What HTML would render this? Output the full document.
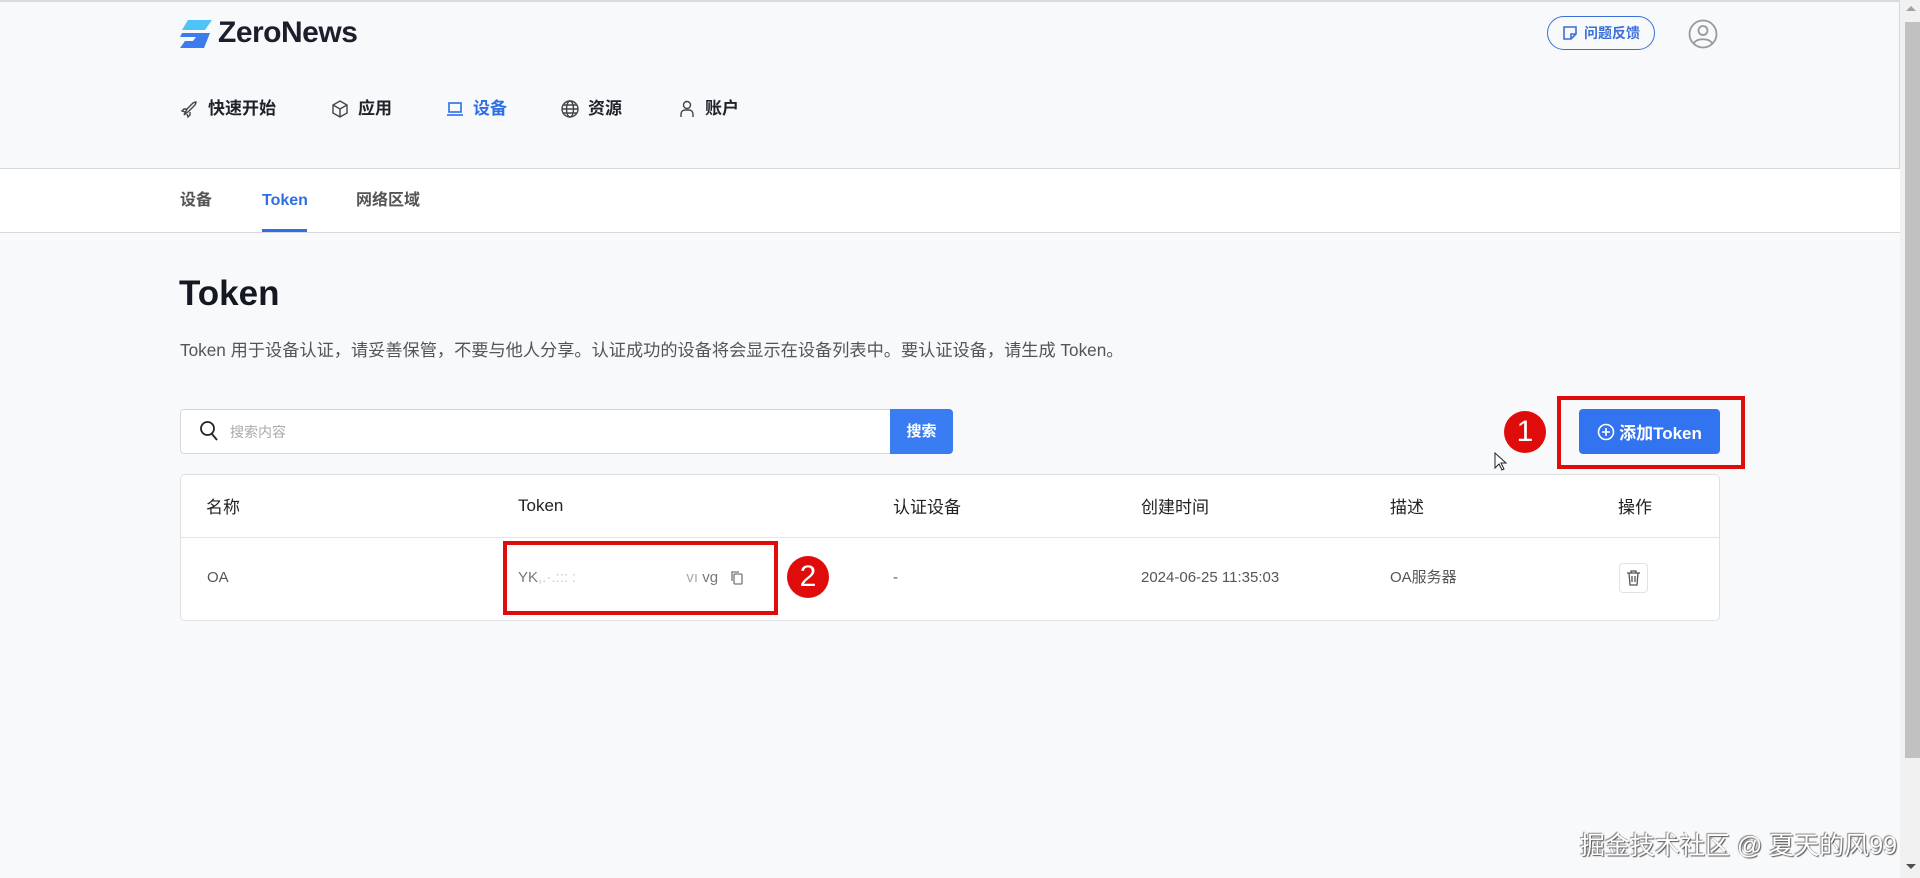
<!DOCTYPE html>
<html><head><meta charset="utf-8"><style>
*{box-sizing:border-box;margin:0;padding:0}
body{width:1920px;height:878px;overflow:hidden;background:#f8f9fb;font-family:"Liberation Sans","Noto Sans CJK SC",sans-serif;position:relative;color:#1f2329}
.abs{position:absolute}
.hdr{left:0;top:0;width:1900px;height:169px;background:#f8f9fb;border-top:2px solid #d9dbe0;border-bottom:1px solid #d6d8dc;border-right:1px solid #d6d8dc}
.sub{left:0;top:169px;width:1900px;height:64px;background:#fff;border-bottom:1px solid #d6d8dc}
.nav{top:97px;font-size:17px;font-weight:bold;display:flex;align-items:center;gap:8px;color:#1f2329;line-height:24px}
.nav svg{width:20px;height:20px}
.tab{top:189px;font-size:16px;color:#555;font-weight:bold;line-height:24px}
.red{border:4px solid #e00b0b}
.circ{width:42px;height:42px;border-radius:50%;background:#e00b0b;color:#fff;font-size:30px;text-align:center;line-height:42px}
.th{top:495px;font-size:17px;color:#222;line-height:26px}
.td{top:566px;font-size:15px;color:#555;line-height:24px}
</style></head><body>
<div class="abs hdr"></div>
<div class="abs sub"></div>
<!-- logo -->
<svg class="abs" style="left:180px;top:20px" width="34" height="28" viewBox="0 0 34 28"><path d="M8 0h24l-7 10H2z" fill="#4fc3f7"/><path d="M2 13h28l-6 15H0l5-7h8l3-4H0z" fill="#3b7cf0"/></svg>
<div class="abs" style="left:218px;top:16px;font-size:30px;font-weight:bold;color:#1b1f2c;letter-spacing:-0.5px">ZeroNews</div>
<!-- nav -->
<div class="abs nav" style="left:180px"><svg viewBox="0 0 20 20" fill="none" stroke="#444" stroke-width="1.4"><path d="M4 16l3-6 6-6c2-1 3-1 3-1s0 1-1 3l-6 6-5 4zM7 10l-3 0-2 2 3 1M10 13v3l-2 2-1-3"/></svg>快速开始</div>
<div class="abs nav" style="left:330px"><svg viewBox="0 0 20 20" fill="none" stroke="#444" stroke-width="1.4"><path d="M10 2l7 4v8l-7 4-7-4V6zM3 6l7 4 7-4M10 10v8"/></svg>应用</div>
<div class="abs nav" style="left:445px;color:#2f6fe4"><svg viewBox="0 0 20 20" fill="none" stroke="#2f6fe4" stroke-width="1.6"><rect x="4" y="4" width="12" height="9"/><path d="M2 16h16"/></svg>设备</div>
<div class="abs nav" style="left:560px"><svg viewBox="0 0 20 20" fill="none" stroke="#444" stroke-width="1.4"><circle cx="10" cy="10" r="8"/><ellipse cx="10" cy="10" rx="3.5" ry="8"/><path d="M2 10h16M3.5 6h13M3.5 14h13"/></svg>资源</div>
<div class="abs nav" style="left:677px"><svg viewBox="0 0 20 20" fill="none" stroke="#444" stroke-width="1.4"><circle cx="10" cy="6" r="3.5"/><path d="M4 18v-3a4 4 0 0 1 4-4h4a4 4 0 0 1 4 4v3"/></svg>账户</div>
<!-- feedback -->
<div class="abs" style="left:1547px;top:16px;width:108px;height:34px;border:1.5px solid #3b6fd8;border-radius:17px;color:#3b6fd8;font-size:14px;font-weight:bold;display:flex;align-items:center;justify-content:center;gap:6px"><svg width="16" height="16" viewBox="0 0 16 16" fill="none" stroke="#3b6fd8" stroke-width="1.6"><path d="M2 2h12v7l-5 5H2z M9 14V9h5"/></svg>问题反馈</div>
<svg class="abs" style="left:1688px;top:19px" width="30" height="30" viewBox="0 0 30 30" fill="none" stroke="#999" stroke-width="1.8"><circle cx="15" cy="15" r="13.5"/><circle cx="15" cy="11.5" r="4.5"/><path d="M6 24c3-5 15-5 18 0"/></svg>
<!-- tabs -->
<div class="abs tab" style="left:180px">设备</div>
<div class="abs tab" style="left:262px;color:#2f6fe4">Token</div>
<div class="abs" style="left:262px;top:229px;width:45px;height:3px;background:#2f6fe4"></div>
<div class="abs tab" style="left:356px">网络区域</div>
<!-- title -->
<div class="abs" style="left:179px;top:274px;font-size:35px;font-weight:bold;color:#141820">Token</div>
<div class="abs" style="left:180px;top:336px;font-size:17.2px;color:#555;white-space:nowrap">Token 用于设备认证，请妥善保管，不要与他人分享。认证成功的设备将会显示在设备列表中。要认证设备，请生成 Token。</div>
<!-- search -->
<div class="abs" style="left:180px;top:409px;width:711px;height:45px;background:#fff;border:1px solid #d5d8dd;border-radius:4px 0 0 4px"></div>
<svg class="abs" style="left:199px;top:420px" width="20" height="22" viewBox="0 0 20 22" fill="none" stroke="#222" stroke-width="1.8"><circle cx="8.5" cy="8.5" r="6.5"/><path d="M13 14l5 6"/></svg>
<div class="abs" style="left:230px;top:422px;font-size:14px;color:#aaa">搜索内容</div>
<div class="abs" style="left:890px;top:409px;width:63px;height:45px;background:#3a7cf2;border-radius:0 4px 4px 0;color:#fff;font-size:15px;font-weight:bold;text-align:center;line-height:45px">搜索</div>
<!-- add button -->
<div class="abs circ" style="left:1504px;top:411px">1</div>
<div class="abs red" style="left:1557px;top:396px;width:188px;height:73px"></div>
<div class="abs" style="left:1579px;top:409px;width:141px;height:45px;background:#3273ef;border-radius:4px;color:#fff;font-size:17px;font-weight:bold;display:flex;align-items:center;justify-content:center;gap:4px"><svg width="18" height="18" viewBox="0 0 18 18" fill="none" stroke="#fff" stroke-width="1.6"><circle cx="9" cy="9" r="7.5"/><path d="M9 5v8M5 9h8"/></svg>添加Token</div>
<svg class="abs" style="left:1494px;top:452px" width="14" height="20" viewBox="0 0 14 20"><path d="M1 1v15l4-4 3 6 2-1-3-6h5z" fill="#fff" stroke="#222" stroke-width="1"/></svg>
<!-- table -->
<div class="abs" style="left:180px;top:474px;width:1540px;height:147px;background:#fff;border:1px solid #dfe1e5;border-radius:5px"></div>
<div class="abs" style="left:181px;top:537px;width:1538px;height:1px;background:#e3e5e8"></div>
<div class="abs th" style="left:206px">名称</div>
<div class="abs th" style="left:518px;top:493px">Token</div>
<div class="abs th" style="left:893px">认证设备</div>
<div class="abs th" style="left:1141px">创建时间</div>
<div class="abs th" style="left:1390px">描述</div>
<div class="abs th" style="left:1618px">操作</div>
<div class="abs td" style="left:207px">OA</div>
<div class="abs td" style="left:518px;color:#777">YK<span style="color:#ccc">,.·.::: :</span><span style="display:inline-block;width:110px"></span><span style="color:#aaa">vı</span> vg</div>
<svg class="abs" style="left:730px;top:570px" width="14" height="16" viewBox="0 0 14 16" fill="none" stroke="#777" stroke-width="1.3"><rect x="4" y="4" width="8" height="10" rx="1"/><path d="M2 11V2h7"/></svg>
<div class="abs td" style="left:893px">-</div>
<div class="abs td" style="left:1141px">2024-06-25 11:35:03</div>
<div class="abs td" style="left:1390px">OA服务器</div>
<div class="abs" style="left:1619px;top:563px;width:29px;height:30px;border:1px solid #e0e2e6;border-radius:4px"></div>
<svg class="abs" style="left:1626px;top:570px" width="15" height="16" viewBox="0 0 15 16" fill="none" stroke="#555" stroke-width="1.3"><path d="M1 3h13M5 3V1h5v2M3 3l1 12h7l1-12M6 6v6M9 6v6"/></svg>
<div class="abs red" style="left:503px;top:541px;width:275px;height:74px"></div>
<div class="abs circ" style="left:787px;top:556px">2</div>
<!-- scrollbar -->
<div class="abs" style="left:1900px;top:0;width:20px;height:878px;background:#f1f1f1"></div>
<div class="abs" style="left:1905px;top:22px;width:15px;height:736px;background:#c1c1c1"></div>
<div class="abs" style="left:1906px;top:6px;width:0;height:0;border-left:5px solid transparent;border-right:5px solid transparent;border-bottom:5px solid #a3a3a3"></div>
<div class="abs" style="left:1906px;top:864px;width:0;height:0;border-left:5px solid transparent;border-right:5px solid transparent;border-top:5px solid #505050"></div>
<!-- watermark -->
<div class="abs" style="left:1580px;top:826px;font-size:25px;color:#fff;text-shadow:1px 1px 1px #555,-1px -1px 1px #888;white-space:nowrap">掘金技术社区 @ 夏天的风99</div>
</body></html>
